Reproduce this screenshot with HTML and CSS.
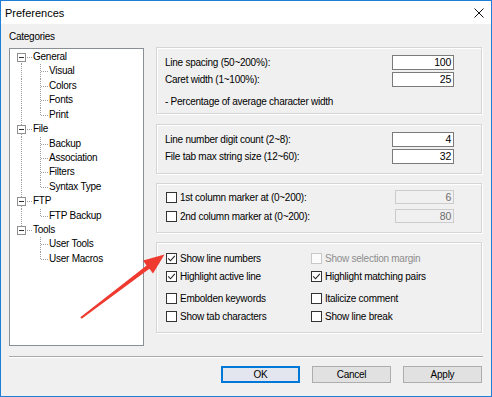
FILE: index.html
```html
<!DOCTYPE html>
<html>
<head>
<meta charset="utf-8">
<link rel="stylesheet" href="styles.css">
</head>
<body>
<div class="window">
  <div class="titlebar">
    <span class="title">Preferences</span>
    <svg class="close" width="10" height="10" viewBox="0 0 10 10"><path d="M0.5 0.5 L9.5 9.5 M9.5 0.5 L0.5 9.5" stroke="#111" stroke-width="1" fill="none"/></svg>
  </div>
  <div class="content">
    <div class="main">
      <div class="leftcol">
        <div class="label">Categories</div>
        <div class="tree">
          <div class="row"><span class="ln root first"><span class="exp"></span></span><span class="txt">General</span></div>
          <div class="row"><span class="ln"></span><span class="cl"></span><span class="txt">Visual</span></div>
          <div class="row"><span class="ln"></span><span class="cl"></span><span class="txt">Colors</span></div>
          <div class="row"><span class="ln"></span><span class="cl"></span><span class="txt">Fonts</span></div>
          <div class="row"><span class="ln"></span><span class="cl last"></span><span class="txt">Print</span></div>
          <div class="row"><span class="ln root"><span class="exp"></span></span><span class="txt">File</span></div>
          <div class="row"><span class="ln"></span><span class="cl"></span><span class="txt">Backup</span></div>
          <div class="row"><span class="ln"></span><span class="cl"></span><span class="txt">Association</span></div>
          <div class="row"><span class="ln"></span><span class="cl"></span><span class="txt">Filters</span></div>
          <div class="row"><span class="ln"></span><span class="cl last"></span><span class="txt">Syntax Type</span></div>
          <div class="row"><span class="ln root"><span class="exp"></span></span><span class="txt">FTP</span></div>
          <div class="row"><span class="ln"></span><span class="cl last"></span><span class="txt">FTP Backup</span></div>
          <div class="row"><span class="ln root lastroot"><span class="exp"></span></span><span class="txt">Tools</span></div>
          <div class="row"><span class="ln none"></span><span class="cl"></span><span class="txt">User Tools</span></div>
          <div class="row"><span class="ln none"></span><span class="cl last"></span><span class="txt">User Macros</span></div>
        </div>
      </div>
      <div class="rightcol">
        <div class="group g1">
          <div class="field"><span>Line spacing (50~200%):</span><span class="input">100</span></div>
          <div class="field"><span>Caret width (1~100%):</span><span class="input">25</span></div>
          <div class="note">- Percentage of average character width</div>
        </div>
        <div class="group g2">
          <div class="field"><span>Line number digit count (2~8):</span><span class="input">4</span></div>
          <div class="field"><span>File tab max string size (12~60):</span><span class="input">32</span></div>
        </div>
        <div class="group g3">
          <div class="field small"><span class="check"><span class="cb"></span>1st column marker at (0~200):</span><span class="input disabled">6</span></div>
          <div class="field small"><span class="check"><span class="cb"></span>2nd column marker at (0~200):</span><span class="input disabled">80</span></div>
        </div>
        <div class="group g4">
          <div class="opts">
            <span class="check"><span class="cb"><svg width="9" height="9" viewBox="0 0 9 9"><path d="M1.2 4.4 L3.5 6.8 L7.8 1.8" stroke="#222" stroke-width="1.1" fill="none"/></svg></span>Show line numbers</span>
            <span class="check dis"><span class="cb"></span>Show selection margin</span>
            <span class="check"><span class="cb"><svg width="9" height="9" viewBox="0 0 9 9"><path d="M1.2 4.4 L3.5 6.8 L7.8 1.8" stroke="#222" stroke-width="1.1" fill="none"/></svg></span>Highlight active line</span>
            <span class="check"><span class="cb"><svg width="9" height="9" viewBox="0 0 9 9"><path d="M1.2 4.4 L3.5 6.8 L7.8 1.8" stroke="#222" stroke-width="1.1" fill="none"/></svg></span>Highlight matching pairs</span>
            <span class="check low"><span class="cb"></span>Embolden keywords</span>
            <span class="check low"><span class="cb"></span>Italicize comment</span>
            <span class="check"><span class="cb"></span>Show tab characters</span>
            <span class="check"><span class="cb"></span>Show line break</span>
          </div>
        </div>
      </div>
    </div>
    <div class="sep"></div>
    <div class="buttons">
      <span class="btn default">OK</span>
      <span class="btn">Cancel</span>
      <span class="btn">Apply</span>
    </div>
  </div>
</div>
<svg class="arrow" width="492" height="397" viewBox="0 0 492 397">
  <polygon points="80.3,317.2 146.6,265.6 143,260.6 164.5,254.5 153,273.6 149.4,268.8 81.7,318.8" fill="#ef3a30"/>
</svg>
</body>
</html>
```

FILE: styles.css
```css
html, body {
  margin: 0;
  padding: 0;
}
body {
  position: relative;
  width: 492px;
  height: 397px;
  overflow: hidden;
  font-family: "Liberation Sans", Arial, sans-serif;
  font-size: 10px;
  letter-spacing: -0.25px;
  color: #000;
  background: #f0f0f0;
}
.window {
  width: 492px;
  height: 397px;
  box-sizing: border-box;
  border: 1px solid #1f7fd6;
  background: #f0f0f0;
  display: flex;
  flex-direction: column;
}
.titlebar {
  height: 23px;
  flex: none;
  background: #fff;
  display: flex;
  align-items: center;
  justify-content: space-between;
  padding: 0 7px 0 4px;
}
.title {
  font-size: 11px;
  letter-spacing: 0;
}
.close {
  display: block;
}
.content {
  flex: 1;
  display: flex;
  flex-direction: column;
  padding: 7px 8px 0 8px;
}
.main {
  display: flex;
  gap: 12px;
  height: 315px;
}
.leftcol {
  width: 135px;
  display: flex;
  flex-direction: column;
}
.label {
  height: 12px;
  line-height: 12px;
  margin-bottom: 5px;
}
.tree {
  height: 298px;
  box-sizing: border-box;
  border: 1px solid #8a8f96;
  background: #fff;
  padding-top: 1px;
}
.row {
  display: flex;
  height: 14.43px;
  line-height: 14.43px;
}
.ln {
  width: 23px;
  flex: none;
  display: flex;
  align-items: center;
  background-image: repeating-linear-gradient(to bottom, #a0a0a0 0 1px, transparent 1px 2px);
  background-repeat: no-repeat;
  background-position: 11px 0;
  background-size: 1px 100%;
}
.ln.none {
  background: none;
}
.ln.root {
  background-image:
    repeating-linear-gradient(to bottom, #a0a0a0 0 1px, transparent 1px 2px),
    repeating-linear-gradient(to right, #a0a0a0 0 1px, transparent 1px 2px);
  background-repeat: no-repeat;
  background-position: 11px 0, 17px 7px;
  background-size: 1px 100%, 5px 1px;
}
.ln.root.first {
  background-position: 11px 7px, 17px 7px;
  background-size: 1px 8px, 5px 1px;
}
.ln.root.lastroot {
  background-position: 11px 0, 17px 7px;
  background-size: 1px 7px, 5px 1px;
}
.exp {
  width: 9px;
  height: 9px;
  box-sizing: border-box;
  margin-left: 7px;
  border: 1px solid #919191;
  background: linear-gradient(#333, #333) no-repeat center / 5px 1px, #fff;
}
.cl {
  width: 16px;
  flex: none;
  background-image:
    repeating-linear-gradient(to bottom, #a0a0a0 0 1px, transparent 1px 2px),
    repeating-linear-gradient(to right, #a0a0a0 0 1px, transparent 1px 2px);
  background-repeat: no-repeat;
  background-position: 7px 0, 8px 7px;
  background-size: 1px 100%, 7px 1px;
}
.cl.last {
  background-size: 1px 8px, 7px 1px;
}
.txt {
  white-space: nowrap;
}
.rightcol {
  width: 326px;
  margin-top: 16px;
  display: flex;
  flex-direction: column;
}
.group {
  box-sizing: border-box;
  border: 1px solid #d5d5d5;
  box-shadow: inset 1px 1px 0 #fff, 1px 1px 0 #fff;
  display: flex;
  flex-direction: column;
}
.g1 {
  height: 67px;
  padding: 7px 27px 0 8px;
  gap: 2px;
}
.g2 {
  height: 50px;
  margin-top: 10px;
  padding: 7px 27px 0 8px;
  gap: 2px;
}
.g3 {
  height: 50px;
  margin-top: 9px;
  padding: 6px 27px 0 9px;
  gap: 5px;
}
.g4 {
  height: 91px;
  margin-top: 9px;
  padding: 8px 8px 0 9px;
}
.field {
  display: flex;
  align-items: center;
  justify-content: space-between;
  height: 15px;
  white-space: nowrap;
}
.field.small {
  height: 14px;
}
.note {
  margin-top: 7px;
  line-height: 12px;
}
.input {
  width: 62px;
  height: 15px;
  box-sizing: border-box;
  border: 1px solid #7a7a7a;
  background: #fff;
  text-align: right;
  padding-right: 2px;
  line-height: 13px;
  font-size: 10.5px;
}
.input.disabled {
  width: 59px;
  height: 14px;
  line-height: 12px;
  border-color: #cccccc;
  background: #f0f0f0;
  color: #6d6d6d;
}
.check {
  display: flex;
  align-items: center;
  gap: 3px;
  white-space: nowrap;
}
.cb {
  width: 11px;
  height: 11px;
  box-sizing: border-box;
  border: 1px solid #333;
  background: #fff;
  display: flex;
  align-items: center;
  justify-content: center;
  flex: none;
}
.cb svg {
  display: block;
}
.check.dis {
  color: #8d8d8d;
}
.check.dis .cb {
  border-color: #c8c8c8;
  background: #fbfbfb;
}
.opts {
  display: grid;
  grid-template-columns: 145px 1fr;
  grid-template-rows: 14px 14px 18px 14px;
  row-gap: 4px;
}
.check.low {
  align-self: end;
  height: 14px;
}
.sep {
  height: 1px;
  margin-top: 10px;
  background: #a9a9a9;
  border-bottom: 1px solid #fff;
}
.buttons {
  display: flex;
  justify-content: flex-end;
  gap: 12px;
  margin-top: 8px;
  margin-right: 1px;
}
.btn {
  width: 79px;
  height: 17px;
  box-sizing: border-box;
  border: 1px solid #adadad;
  background: #e1e1e1;
  text-align: center;
  line-height: 15px;
}
.btn.default {
  border-color: #0078d7;
  box-shadow: inset 0 0 0 1px #0078d7;
  background: #e3e6ee;
}
.arrow {
  position: absolute;
  left: 0;
  top: 0;
  pointer-events: none;
}
```
